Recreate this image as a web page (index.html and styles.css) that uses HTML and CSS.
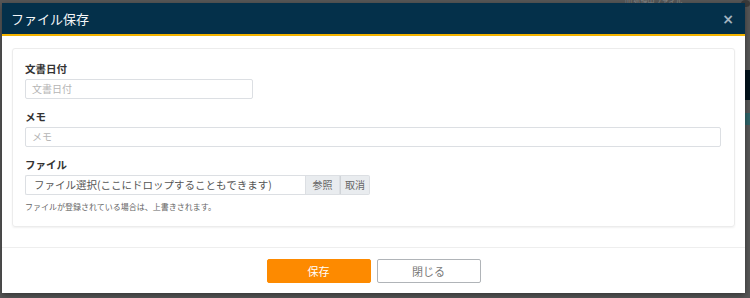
FILE: index.html
```html
<!DOCTYPE html>
<html lang="ja">
<head>
<meta charset="utf-8">
<link rel="stylesheet" href="styles.css">
</head>
<body>
<div class="backdrop">
  <div class="bg-text">ﾛﾛ 処理中ファイル</div>
  <div class="bg-bar"></div>
  <div class="bg-teal"></div>
  <div class="bg-dot"></div>
</div>
<div class="modal">
  <div class="modal-header">
    <span class="modal-title">ファイル保存</span>
    <span class="modal-close">×</span>
  </div>
  <div class="modal-body">
    <div class="card">
      <div class="group">
        <label class="label">文書日付</label>
        <div class="input input-short">文書日付</div>
      </div>
      <div class="group">
        <label class="label">メモ</label>
        <div class="input input-wide">メモ</div>
      </div>
      <div class="group">
        <label class="label">ファイル</label>
        <div class="file-row">
          <div class="file-text">ファイル選択(ここにドロップすることもできます)</div>
          <div class="file-btn">参照</div>
          <div class="file-btn">取消</div>
        </div>
        <div class="help">ファイルが登録されている場合は、上書きされます。</div>
      </div>
    </div>
  </div>
  <div class="modal-footer">
    <div class="btn btn-save">保存</div>
    <div class="btn btn-close">閉じる</div>
  </div>
</div>
</body>
</html>
```
FILE: styles.css
```css
html, body {
  margin: 0;
  padding: 0;
  width: 750px;
  height: 298px;
  overflow: hidden;
  background: #575757;
  font-family: "Noto Sans CJK JP", "Noto Sans", sans-serif;
}
.backdrop {
  position: absolute;
  inset: 0;
}
.bg-text {
  position: absolute;
  left: 625px;
  top: -2px;
  font-size: 7px;
  line-height: 7px;
  color: #8a8a8a;
}
.bg-bar {
  position: absolute;
  left: 744px;
  top: 70px;
  width: 6px;
  height: 30px;
  background: #03131c;
}
.bg-teal {
  position: absolute;
  left: 744px;
  top: 113px;
  width: 6px;
  height: 12px;
  background: #2f6468;
}
.bg-dot {
  position: absolute;
  left: 741px;
  top: 0px;
  width: 9px;
  height: 7px;
  border-radius: 50%;
  background: #3a3a3a;
}
.modal {
  position: absolute;
  left: 2px;
  top: 3px;
  width: 743px;
  height: 290px;
  background: #fff;
  display: flex;
  flex-direction: column;
  box-shadow: 0 2px 6px rgba(0,0,0,0.4);
}
.modal-header {
  height: 35px;
  background: #04304a;
  border-bottom: 2px solid #f3b300;
  display: flex;
  align-items: center;
  justify-content: space-between;
  padding: 0 11px 0 9px;
}
.modal-title {
  color: #f4f6f8;
  font-size: 13px;
  margin-top: -1px;
}
.modal-close {
  color: #a3b3bf;
  font-size: 14px;
  font-weight: bold;
  font-family: "DejaVu Sans", sans-serif;
  line-height: 1;
  margin-top: 1px;
}
.modal-body {
  padding: 12px 10px 20px 10px;
}
.card {
  border: 1px solid #ececec;
  border-radius: 3px;
  box-shadow: 0 1px 2px rgba(0,0,0,0.06);
  padding: 13px 13px 13px 12px;
  display: flex;
  flex-direction: column;
  gap: 11px;
}
.group {
  display: flex;
  flex-direction: column;
}
.label {
  font-size: 10.5px;
  font-weight: bold;
  color: #333;
  line-height: 14px;
  margin-bottom: 3px;
}
.input {
  height: 18px;
  border: 1px solid #dcdfe3;
  border-radius: 2px;
  font-size: 10px;
  color: #b5b5b5;
  line-height: 18px;
  padding-left: 6px;
  box-sizing: content-box;
}
.input-short {
  width: 220px;
}
.input-wide {
  width: 688px;
}
.file-row {
  display: flex;
  height: 20px;
}
.file-text {
  width: 271px;
  border: 1px solid #dcdfe3;
  border-right: none;
  border-radius: 2px 0 0 2px;
  font-size: 10.5px;
  color: #555;
  line-height: 18px;
  padding-left: 8px;
}
.file-btn {
  width: 33px;
  background: #e9ecef;
  border: 1px solid #dcdfe3;
  font-size: 10px;
  color: #666;
  line-height: 18px;
  text-align: center;
}
.file-btn + .file-btn {
  border-left: 1px solid #d0d4d8;
  width: 28px;
  border-radius: 0 2px 2px 0;
}
.help {
  font-size: 8px;
  color: #666;
  line-height: 12px;
  margin-top: 6px;
}
.modal-footer {
  border-top: 1px solid #eeeeee;
  padding: 11px 0 10px;
  display: flex;
  justify-content: center;
  gap: 6px;
}
.btn {
  width: 104px;
  height: 24px;
  box-sizing: border-box;
  border-radius: 2px;
  font-size: 11px;
  line-height: 22px;
  text-align: center;
}
.btn-save {
  background: #fd8a00;
  border: 1px solid #fd8a00;
  color: #fff;
}
.btn-close {
  background: #fff;
  border: 1px solid #b0b4b8;
  color: #777;
}
```
